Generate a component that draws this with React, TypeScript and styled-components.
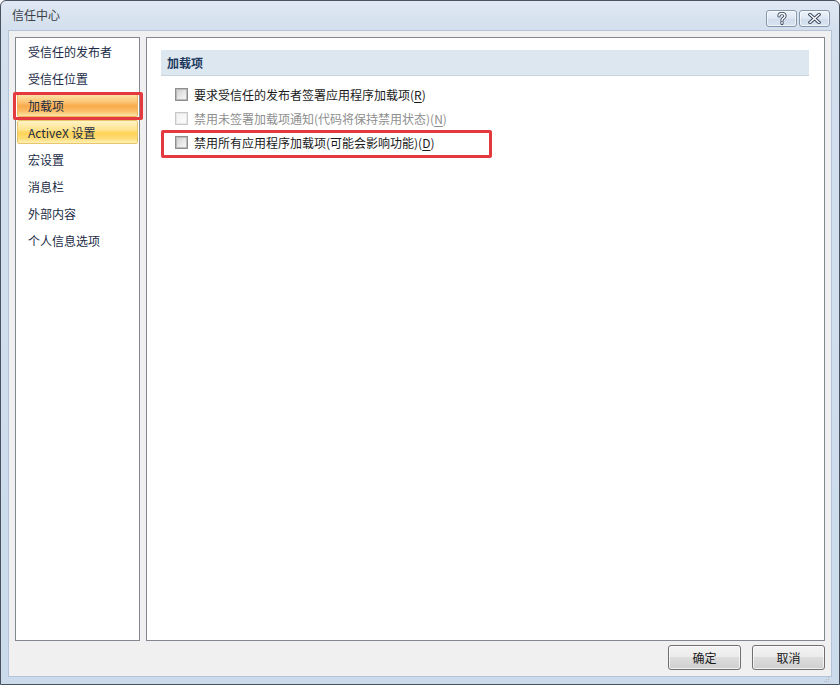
import React from "react";
import styled, { createGlobalStyle } from "styled-components";

const Global = createGlobalStyle`
  html, body { margin: 0; padding: 0; background: #ffffff; }
  body { font-family: "Noto Sans CJK SC", "Noto Sans", sans-serif; font-size: 12px; }
  * { box-sizing: border-box; }
`;

const Window = styled.div`
  width: 840px;
  height: 685px;
  display: flex;
  flex-direction: column;
  border: 1px solid #4a5260;
  border-radius: 6px 6px 0 0;
  background: linear-gradient(180deg, #dfe8f3 0px, #d3dfed 30px, #cbdbec 100%);
  padding: 0 7px 7px 7px;
  overflow: hidden;
`;

const TitleBar = styled.div`
  height: 29px;
  display: flex;
  align-items: center;
  justify-content: space-between;
  padding: 0 2px 0 4px;
`;

const Title = styled.span`
  font-size: 12px;
  color: #3a3f48;
  line-height: 1;
  margin-top: -2px;
`;

const CaptionButtons = styled.div`
  display: flex;
  gap: 2px;
  align-self: flex-start;
  margin-top: 9px;
`;

const CaptionButton = styled.div`
  width: 31px;
  height: 17px;
  border: 1px solid #8797ab;
  border-radius: 3px;
  background: linear-gradient(180deg, #eef3fa 0%, #dde7f3 50%, #cfdbea 51%, #d9e4f1 100%);
  box-shadow: inset 0 0 0 1px rgba(255, 255, 255, 0.6);
  display: flex;
  align-items: center;
  justify-content: center;
`;

const Client = styled.div`
  flex: 1;
  display: flex;
  flex-direction: column;
  background: #f0f0f0;
  border: 1px solid #b4c4d8;
  padding: 6px;
  position: relative;
`;

const Panels = styled.div`
  flex: 1;
  display: flex;
  gap: 6px;
  min-height: 0;
`;

const NavPanel = styled.div`
  width: 125px;
  background: #ffffff;
  border: 1px solid #828790;
  display: flex;
  flex-direction: column;
  gap: 3px;
  padding: 1px 1px 0 1px;
`;

const NavItem = styled.div<{ $state?: "selected" | "hover" }>`
  position: relative;
  height: 24px;
  display: flex;
  align-items: center;
  padding-left: 10px;
  color: #1b2c46;
  font-size: 12px;
  border: 1px solid transparent;
  border-radius: 2px;
  ${(p) =>
    p.$state === "selected"
      ? `
    background: linear-gradient(180deg, #fde5ab 0%, #fcc678 35%, #f9a949 55%, #fbc06c 80%, #fde7a6 100%);
    border-color: #f0b45f;
  `
      : p.$state === "hover"
      ? `
    background: linear-gradient(180deg, #fff3c6 0%, #ffe38f 40%, #fed255 55%, #fedd78 80%, #fff1b8 100%);
    border-color: #e9c66b;
  `
      : ""}
`;

const Mark = styled.div<{ $t: number; $b: number; $l: number; $r?: number; $w?: number }>`
  position: absolute;
  top: ${(p) => p.$t}px;
  bottom: ${(p) => p.$b}px;
  left: ${(p) => p.$l}px;
  ${(p) => (p.$w !== undefined ? `width: ${p.$w}px;` : `right: ${p.$r ?? 0}px;`)}
  border: 3px solid #e4393e;
  border-radius: 2px;
  pointer-events: none;
`;

const ContentPanel = styled.div`
  flex: 1;
  background: #ffffff;
  border: 1px solid #828790;
  padding: 12px 15px 0 14px;
  display: flex;
  flex-direction: column;
`;

const SectionHeader = styled.div`
  height: 26px;
  background: #dde7ef;
  border-bottom: 1px solid #c8d4df;
  display: flex;
  align-items: center;
  padding-left: 6px;
  font-weight: bold;
  font-size: 12px;
  color: #1e3a5f;
`;

const Options = styled.div`
  display: flex;
  flex-direction: column;
  margin-top: 6px;
`;

const OptionRow = styled.div<{ $disabled?: boolean }>`
  position: relative;
  height: 24px;
  display: flex;
  align-items: center;
  gap: 6px;
  padding-left: 14px;
  color: ${(p) => (p.$disabled ? "#8e8e8e" : "#1a1a1a")};
  font-size: 12px;
  white-space: nowrap;
`;

const Box = styled.span<{ $disabled?: boolean }>`
  width: 13px;
  height: 13px;
  flex: none;
  border: 1px solid ${(p) => (p.$disabled ? "#c9c9c9" : "#8e8f8f")};
  background: #ffffff;
  display: flex;
  align-items: center;
  justify-content: center;
  &::after {
    content: "";
    width: 9px;
    height: 9px;
    background: ${(p) =>
      p.$disabled
        ? "linear-gradient(135deg, #f2f2f2, #fbfbfb)"
        : "linear-gradient(135deg, #cfcfcf 0%, #e6e6e6 50%, #f6f6f6 100%)"};
    border: 1px solid ${(p) => (p.$disabled ? "#e6e6e6" : "#b9b9b9")};
  }
`;

const Key = styled.span`
  text-decoration: underline;
  text-underline-offset: 2px;
`;

const Footer = styled.div`
  display: flex;
  justify-content: flex-end;
  gap: 11px;
  margin-top: 4px;
`;

const Button = styled.button`
  width: 73px;
  height: 25px;
  border: 1px solid #707070;
  border-radius: 3px;
  background: linear-gradient(180deg, #f3f3f3 0%, #ebebeb 48%, #dddddd 50%, #cfcfcf 100%);
  box-shadow: inset 0 0 0 1px rgba(255, 255, 255, 0.7);
  font-family: "Noto Sans CJK SC", "Noto Sans", sans-serif;
  font-size: 12px;
  color: #1a1a1a;
  padding: 0;
`;

const Grip = styled.div`
  position: absolute;
  right: 1px;
  bottom: 1px;
  width: 6px;
  height: 6px;
`;

const navItems = [
  "受信任的发布者",
  "受信任位置",
  "加载项",
  "ActiveX 设置",
  "宏设置",
  "消息栏",
  "外部内容",
  "个人信息选项",
];

export default function App() {
  return (
    <>
      <Global />
      <Window>
        <TitleBar>
          <Title>信任中心</Title>
          <CaptionButtons>
            <CaptionButton>
              <svg width="10" height="13" viewBox="0 0 10 13">
                <path
                  d="M2 4 Q2 1.5 5 1.5 Q8 1.5 8 4 Q8 5.5 6 6.5 Q5 7 5 8.5 M5 10.2 L5 11.6"
                  fill="none"
                  stroke="#3b4a60"
                  strokeWidth="3.2"
                  strokeLinecap="round"
                />
                <path
                  d="M2 4 Q2 1.5 5 1.5 Q8 1.5 8 4 Q8 5.5 6 6.5 Q5 7 5 8.5 M5 10.2 L5 11.6"
                  fill="none"
                  stroke="#ffffff"
                  strokeWidth="1.4"
                  strokeLinecap="round"
                />
              </svg>
            </CaptionButton>
            <CaptionButton>
              <svg width="13" height="11" viewBox="0 0 13 11">
                <path d="M2 1.5 L11 9.5 M11 1.5 L2 9.5" stroke="#3b4a60" strokeWidth="3.4" strokeLinecap="square" />
                <path d="M2 1.5 L11 9.5 M11 1.5 L2 9.5" stroke="#ffffff" strokeWidth="1.4" strokeLinecap="square" />
              </svg>
            </CaptionButton>
          </CaptionButtons>
        </TitleBar>
        <Client>
          <Panels>
            <NavPanel>
              {navItems.map((t, i) => (
                <NavItem key={t} $state={i === 2 ? "selected" : i === 3 ? "hover" : undefined}>
                  {t}
                  {i === 2 && <Mark $t={-2} $r={-6} $b={-4} $l={-5} />}
                </NavItem>
              ))}
            </NavPanel>
            <ContentPanel>
              <SectionHeader>加载项</SectionHeader>
              <Options>
                <OptionRow>
                  <Box />
                  <span>
                    要求受信任的发布者签署应用程序加载项(<Key>R</Key>)
                  </span>
                </OptionRow>
                <OptionRow $disabled>
                  <Box $disabled />
                  <span>
                    禁用未签署加载项通知(代码将保持禁用状态)(<Key>N</Key>)
                  </span>
                </OptionRow>
                <OptionRow>
                  <Box />
                  <span>
                    禁用所有应用程序加载项(可能会影响功能)(<Key>D</Key>)
                  </span>
                  <Mark $t={0} $b={-4} $l={0} $w={331} />
                </OptionRow>
              </Options>
            </ContentPanel>
          </Panels>
          <Footer>
            <Button>确定</Button>
            <Button>取消</Button>
          </Footer>
          <Grip>
            <svg width="6" height="6" viewBox="0 0 6 6">
              <rect x="4" y="0" width="1" height="1" fill="#b8b8b8" />
              <rect x="2" y="2" width="1" height="1" fill="#b8b8b8" />
              <rect x="4" y="2" width="1" height="1" fill="#b8b8b8" />
              <rect x="0" y="4" width="1" height="1" fill="#b8b8b8" />
              <rect x="2" y="4" width="1" height="1" fill="#b8b8b8" />
              <rect x="4" y="4" width="1" height="1" fill="#b8b8b8" />
            </svg>
          </Grip>
        </Client>
      </Window>
    </>
  );
}
